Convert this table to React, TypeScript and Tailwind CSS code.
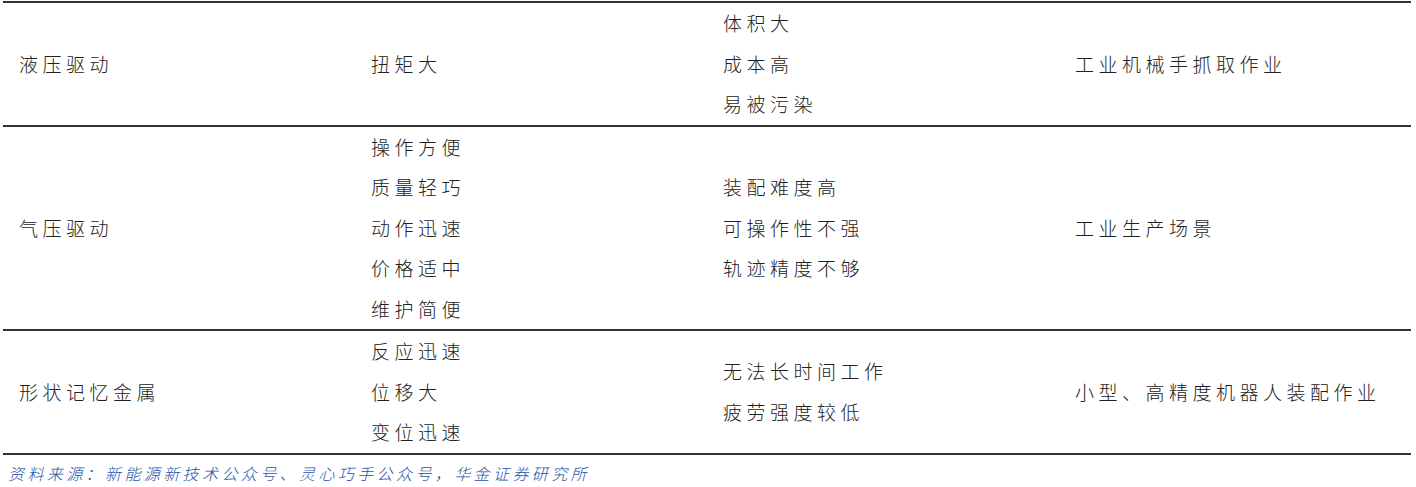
const rows: { name: string; adv: string[]; dis: string[]; use: string }[] = [
  { name: '液压驱动', adv: ['扭矩大'], dis: ['体积大', '成本高', '易被污染'], use: '工业机械手抓取作业' },
  {
    name: '气压驱动',
    adv: ['操作方便', '质量轻巧', '动作迅速', '价格适中', '维护简便'],
    dis: ['装配难度高', '可操作性不强', '轨迹精度不够'],
    use: '工业生产场景',
  },
  {
    name: '形状记忆金属',
    adv: ['反应迅速', '位移大', '变位迅速'],
    dis: ['无法长时间工作', '疲劳强度较低'],
    use: '小型、高精度机器人装配作业',
  },
];

function Cell({ lines }: { lines: string[] }) {
  return (
    <div className="flex flex-col justify-center pl-4">
      {lines.map((l) => (
        <div key={l} className="leading-[40.5px]">
          {l}
        </div>
      ))}
    </div>
  );
}

export default function App() {
  return (
    <div
      className="h-[487px] w-[1416px] bg-white pt-[1px] pl-[3px] text-[19px] font-light tracking-[4.5px] text-[#222]"
      style={{ fontFamily: '"Noto Sans CJK SC", sans-serif' }}
    >
      <div className="w-[1408px] border-b-2 border-[#333]">
        {rows.map((r) => (
          <div key={r.name} className="grid grid-cols-4 border-t-2 border-[#333]">
            <Cell lines={[r.name]} />
            <Cell lines={r.adv} />
            <Cell lines={r.dis} />
            <Cell lines={[r.use]} />
          </div>
        ))}
      </div>
      <div className="mt-[7px] pl-[5px] text-[16px] italic leading-[22px] tracking-[3.4px] text-[#2553a8]">
        资料来源：新能源新技术公众号、灵心巧手公众号，华金证券研究所
      </div>
    </div>
  );
}
